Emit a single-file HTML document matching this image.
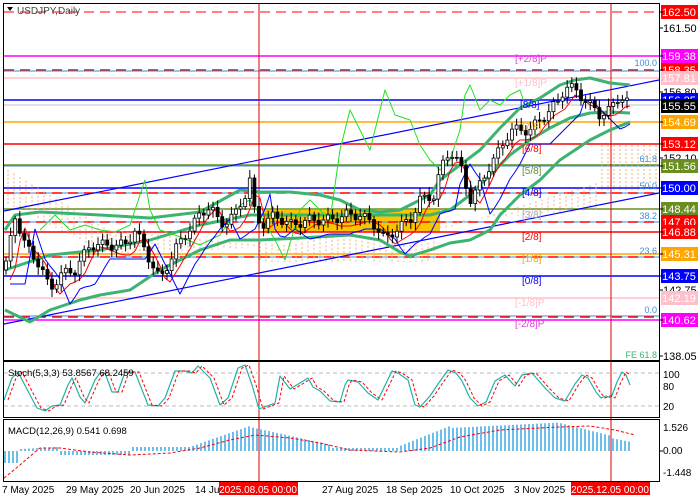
<!DOCTYPE html>
<html><head><meta charset="utf-8"><style>
html,body{margin:0;padding:0;background:#fff;width:700px;height:500px;overflow:hidden}
svg{display:block;font-family:"Liberation Sans",sans-serif}
</style></head><body>
<svg id="s" width="700" height="500" xmlns="http://www.w3.org/2000/svg">
<rect width="700" height="500" fill="#fff"/>
<g id="main"></g>
</svg>
<script>
const S=document.getElementById('main');
let h='';
function L(x1,y1,x2,y2,c,w,d){h+=`<line x1="${x1}" y1="${y1}" x2="${x2}" y2="${y2}" stroke="${c}" stroke-width="${w||1}" ${d?`stroke-dasharray="${d}"`:''}/>`;}
function P(pts,c,w,d){h+=`<polyline fill="none" points="${pts.map(p=>p.join(',')).join(' ')}" stroke="${c}" stroke-width="${w||1}" ${d?`stroke-dasharray="${d}"`:''} stroke-linejoin="round"/>`;}
function T(x,y,t,c,sz,anch){h+=`<text x="${x}" y="${y}" fill="${c}" font-size="${sz||10}" ${anch?`text-anchor="${anch}"`:''}>${t}</text>`;}
const R=659;
h+=`<rect x="263" y="210" width="177" height="22" fill="#f7c600"/>`;
L(4,12,R,12,'#f00',1,'10,6');
L(4,56,R,56,'#f0f',1.5);
L(4,70,R,70,'#f00',1.5,'10,6');L(4,71,R,71,'#3a8ee0',1);
L(4,78,R,78,'#ffc0cb',1.5);
L(4,100,R,100,'#00f',1.5);
L(4,105,R,105,'#c0c0c0',1);
L(4,122,R,122,'#ffa500',1.5);
L(4,144,R,144,'#f00',1.5);
L(4,165,R,165,'#6b8e23',1.5);L(4,166,R,166,'#3a8ee0',1);
L(4,188,R,188,'#00f',1.5);
L(4,193,R,193,'#3a8ee0',1);L(4,193,R,193,'#f00',1.5,'10,6');
L(4,209,R,209,'#6b8e23',1.5);
L(4,222,R,222,'#3a8ee0',1);L(4,222,R,222,'#f00',1.5,'10,6');
L(4,232,R,232,'#f00',1.5);
L(4,254,R,254,'#ffa500',1.5);
L(4,257,R,257,'#3a8ee0',1);L(4,257,R,257,'#f00',1.5,'10,6');
L(4,276,R,276,'#00f',1.5);
L(4,298,R,298,'#ffc0cb',1.5);
L(4,316,R,316,'#3a8ee0',1);L(4,317,R,317,'#f00',1.5,'10,6');
L(4,320,R,320,'#f0f',1.5);
let cl='';for(let x=8;x<R;x+=6){let top,bot;
 if(x<110){top=165+x*0.6;bot=200+x*0.5}else if(x<260){top=230+((x-110)*0.1);bot=255-((x-110)*0.05);}else if(x<440){top=240+Math.sin(x/20)*5;bot=262;}else{top=230-(x-440)*0.3;bot=222-(x-440)*0.08;}
 if(x>600){top=145;bot=190}
 if(bot<top){let q=top;top=bot;bot=q}
 cl+=`<line x1="${x}" y1="${top}" x2="${x}" y2="${bot}" stroke="#f0b080" stroke-width="1" stroke-dasharray="2,2"/>`;}
h+=cl;
L(4,211,R,80,'#00f',1.2);
L(4,324,R,193,'#00f',1.2);
L(259,4,259,482,'#d00',1);L(611,4,611,482,'#d00',1);
const ub=[[5,230],[15,215],[40,212],[100,215],[150,218],[200,212],[240,190],[260,192],[290,192],[320,195],[340,200],[360,210],[380,212],[400,210],[430,195],[440,180],[460,165],[480,150],[500,128],[520,108],[540,98],[560,85],[575,80],[590,78],[610,83],[630,85]];
const mb=[[5,270],[50,255],[100,250],[150,240],[200,225],[250,215],[300,215],[350,215],[400,215],[430,215],[450,210],[470,195],[490,175],[510,155],[530,140],[550,128],[570,118],[590,113],[610,112],[630,113]];
const lb=[[5,310],[30,322],[50,310],[80,300],[100,295],[130,290],[160,270],[200,250],[230,240],[260,240],[300,238],[350,235],[380,240],[400,252],[410,256],[430,250],[450,243],[470,240],[490,230],[500,215],[520,195],[540,180],[560,160],[590,140],[610,130],[630,122]];
P(ub,'#3cb371',3);P(mb,'#3cb371',3);P(lb,'#3cb371',3);
P([[40,230],[55,215],[70,230],[85,225],[100,230],[115,232],[130,225],[140,195],[145,180],[150,210],[160,230],[175,235],[200,245],[220,235],[240,205],[250,200],[260,215],[275,240],[285,260],[300,210],[310,200],[330,220],[340,150],[350,110],[360,130],[370,150],[385,90],[395,115],[410,120],[420,145],[430,160],[440,170],[450,160],[460,130],[465,95],[470,85],[480,110],[490,100],[500,105],[510,95],[520,90],[525,105]],'#22e022',1);
const pp=[[5,270],[15,215],[25,245],[40,265],[50,290],[60,275],[75,270],[90,245],[110,245],[125,245],[135,230],[145,250],[160,280],[175,250],[185,235],[200,215],[210,205],[220,225],[235,215],[245,195],[250,180],[255,215],[262,225],[275,215],[290,225],[310,220],[330,220],[345,215],[360,215],[375,225],[385,240],[395,230],[410,220],[420,200],[435,195],[440,170],[450,150],[460,165],[470,200],[480,185],[490,165],[500,150],[510,130],[520,130],[530,130],[540,120],[550,110],[560,100],[565,85],[575,90],[590,105],[600,115],[610,110],[620,95],[630,105]];
function at(x){if(x<=pp[0][0])return pp[0][1];for(let i=0;i<pp.length-1;i++){if(x>=pp[i][0]&&x<=pp[i+1][0]){let t=(x-pp[i][0])/(pp[i+1][0]-pp[i][0]);return pp[i][1]+t*(pp[i+1][1]-pp[i][1]);}}return pp[pp.length-1][1];}
let rl=[],bl=[];for(let x=10;x<=630;x+=5){rl.push([x,Math.round(at(x-8)+6+Math.sin(x/9)*4)]);bl.push([x,Math.round(at(x-20)+14)]);}
P(rl,'#f00',1);P(bl,'#00f',1);
let c='',prev=at(5);
for(let x=6;x<=630;x+=4.6){let cl2=at(x)+Math.sin(x*1.7)*5;let o=prev;let hi=Math.min(o,cl2)-3-Math.abs(Math.sin(x*3.1))*5;let lo=Math.max(o,cl2)+3+Math.abs(Math.cos(x*2.3))*5;
 c+=`<line x1="${x}" y1="${hi}" x2="${x}" y2="${lo}" stroke="#000" stroke-width="1"/>`;
 let top=Math.min(o,cl2),bh=Math.max(1,Math.abs(o-cl2));
 c+=`<rect x="${x-1.5}" y="${top}" width="3" height="${bh}" fill="${cl2<o?'#fff':'#000'}" stroke="#000" stroke-width="0.8"/>`;prev=cl2;}
h+=c;
T(515,62,'[+2/8]P','#e040e0',10);T(515,86,'[+1/8]P','#ffc0cb',10);T(520,108,'[8/8]','#00f',10);T(522,130,'[7/8]','#ffa500',10);
T(522,152,'[6/8]','#f00',10);T(522,174,'[5/8]','#6b8e23',10);T(522,196,'[4/8]','#00f',10);T(522,218,'[3/8]','#aaa',10);
T(522,240,'[2/8]','#f00',10);T(522,262,'[1/8]','#ffa500',10);T(522,284,'[0/8]','#00f',10);T(515,306,'[-1/8]P','#ffc0cb',10);T(515,327,'[-2/8]P','#e040e0',10);
[[66,'100.0'],[162,'61.8'],[189,'50.0'],[219,'38.2'],[254,'23.6'],[313,'0.0']].forEach(a=>T(657,a[0],a[1],'#3a8ee0',9,'end'));
T(657,358,'FE 61.8','#3cb371',9,'end');
T(17,14,'USDJPY,Daily','#444',10);h+=`<polygon points="7,7 13,7 10,11" fill="#000"/>`;
L(4,373,R,373,'#bbb',1,'4,3');L(4,406,R,406,'#bbb',1,'4,3');
const st=[[4,400],[12,378],[18,372],[30,395],[37,408],[45,411],[52,406],[60,405],[68,385],[72,378],[80,397],[85,403],[95,380],[100,373],[105,373],[112,392],[118,392],[125,372],[135,372],[148,405],[158,406],[165,398],[175,371],[185,371],[192,373],[198,366],[210,378],[220,405],[228,398],[238,368],[245,365],[252,385],[259,409],[275,403],[280,376],[290,389],[300,383],[308,378],[313,387],[320,391],[330,401],[340,402],[345,385],[348,380],[358,382],[368,393],[378,400],[392,371],[398,373],[408,380],[415,405],[420,407],[430,396],[438,384],[448,370],[456,373],[462,381],[470,398],[478,406],[486,402],[495,381],[505,375],[512,383],[515,386],[522,375],[532,373],[538,380],[546,389],[555,398],[565,401],[575,384],[582,375],[588,378],[596,392],[601,398],[606,396],[611,398],[617,382],[622,372],[626,375],[630,385]];
P(st,'#20b2aa',1.2);
P(st.slice(0,-1).map(p=>[p[0]+4,p[1]]),'#f00',1,'3,2');
T(8,376,'Stoch(5,3,3) 53.8567 68.2459','#000',9.5);
let m='';for(let x=5;x<640;x+=4){let v;
 if(x<20)v=-12;else if(x<60)v=2+ (x-20)*0.05;else if(x<130)v=-4;else if(x<190)v=4;else if(x<250)v=4+(x-190)*0.35;else if(x<330)v=24-(x-250)*0.22;else if(x<400)v=3;else if(x<450)v=5+(x-400)*0.4;else if(x<560)v=23+(x-450)*0.05;else if(x<611)v=28-(x-560)*0.25;else v=13-(x-611)*0.2;
 if(x>632)break;
 m+=`<line x1="${x}" y1="451" x2="${x}" y2="${451-v}" stroke="#1e9be0" stroke-width="1.3"/>`;}
h+=m;
P([[4,478],[20,465],[35,452],[40,448],[60,448],[90,452],[130,455],[170,453],[200,448],[230,440],[255,435],[290,438],[320,443],[350,450],[400,452],[430,448],[460,437],[500,430],[560,427],[590,426],[615,430],[635,435]],'#f00',1,'3,2');
T(8,434,'MACD(12,26,9) 0.541 0.698','#000',9.5);
h+=`<rect x="3.5" y="3.5" width="656" height="357" fill="none" stroke="#000" stroke-width="1"/>`;
h+=`<rect x="3.5" y="361.5" width="656" height="56" fill="none" stroke="#000" stroke-width="1"/>`;
h+=`<rect x="3.5" y="419.5" width="656" height="62" fill="none" stroke="#000" stroke-width="1"/>`;
h+=`<rect x="0" y="0" width="700" height="2" fill="#fff"/>`;
const box=(y,t,bg,fg)=>{h+=`<rect x="661" y="${y-7}" width="37" height="14" fill="${bg}"/>`;T(679,y+4,t,fg||'#fff',11,'middle');};
T(663,32,'161.50','#000',11);T(663,96,'156.80','#000',11);T(663,162,'152.10','#000',11);T(663,294,'142.75','#000',11);T(663,360,'138.05','#000',11);
box(12,'162.50','#f00');box(56,'159.38','#f0f');box(70,'158.35','#f00');box(78,'157.81','#ffc0cb');
box(100,'156.25','#00f');box(106,'155.55','#000');box(122,'154.69','#ffa500');box(144,'153.12','#f00');
box(166,'151.56','#6b8e23');box(188,'150.00','#00f');box(209,'148.44','#6b8e23');box(222,'147.60','#f00');box(232,'146.88','#f00');
box(254,'145.31','#ffa500');box(276,'143.75','#00f');box(298,'142.19','#ffc0cb');box(320,'140.62','#f0f');
T(663,378,'100','#000',10);T(663,390,'80','#000',10);T(663,410,'20','#000',10);
T(663,431,'1.526','#000',10);T(663,454,'0.00','#000',10);T(663,476,'-1.448','#000',10);
for(const y of [12,28,56,70,92,100,122,144,158,166,188,209,232,254,276,290,320,356,451])L(659,y,663,y,'#000',1);
[[2,'7 May 2025'],[66,'29 May 2025'],[130,'20 Jun 2025'],[195,'14 Jul'],[322,'27 Aug 2025'],[386,'18 Sep 2025'],[450,'10 Oct 2025'],[514,'3 Nov 2025']].forEach(a=>T(a[0],493,a[1],'#000',10));
h+=`<rect x="219" y="482" width="79" height="13" fill="#f00"/>`;T(258,493,'2025.08.05 00:00','#fff',10,'middle');
h+=`<rect x="571" y="482" width="79" height="13" fill="#f00"/>`;T(610,493,'2025.12.05 00:00','#fff',10,'middle');
S.innerHTML=h;
</script>
</body></html>
